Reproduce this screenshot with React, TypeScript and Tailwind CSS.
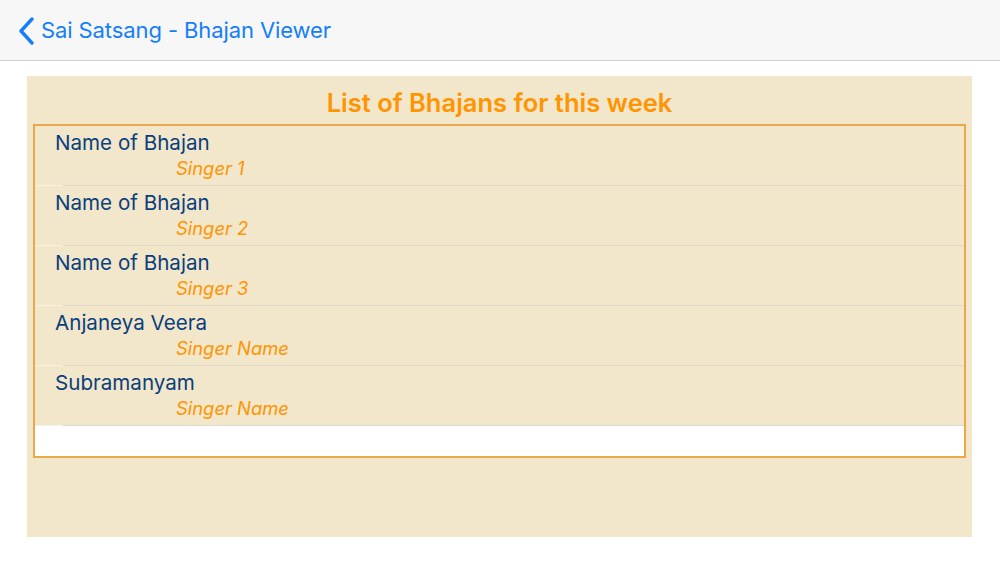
import React from "react";

const rows = [
  { name: "Name of Bhajan", singer: "Singer 1" },
  { name: "Name of Bhajan", singer: "Singer 2" },
  { name: "Name of Bhajan", singer: "Singer 3" },
  { name: "Anjaneya Veera", singer: "Singer Name" },
  { name: "Subramanyam", singer: "Singer Name" },
];

export default function App() {
  return (
    <div
      className="w-[1000px] h-[563px] bg-white flex flex-col"
      style={{ fontFamily: "Inter, 'Noto Sans', sans-serif" }}
    >
      <div className="h-[61px] bg-[#f7f7f7] border-b border-[#cfcfcf] flex items-center pl-[18px]">
        <svg width="18" height="28" viewBox="0 0 18 28" className="mr-[5px] mt-[1px]">
          <path
            d="M14 2 L3 14 L14 26"
            fill="none"
            stroke="#147efb"
            strokeWidth="3.4"
            strokeLinecap="round"
            strokeLinejoin="round"
          />
        </svg>
        <span className="text-[22px] text-[#147efb] tracking-[-0.1px]">Sai Satsang - Bhajan Viewer</span>
      </div>
      <div className="mt-[15px] ml-[27px] w-[945px] h-[461px] bg-[#f2e6cb] flex flex-col px-[6px]">
        <div className="h-[48px] flex items-center justify-center pt-[6px]">
          <span className="text-[25.5px] font-semibold text-[#ff9500]">List of Bhajans for this week</span>
        </div>
        <div className="border-2 border-[#eaa84a] h-[334px] flex flex-col">
          {rows.map((r, i) => (
            <div key={i} className="h-[60px] flex flex-col relative">
              <div className="pl-[20px] pt-[4px] text-[20.6px] leading-[26px] text-[#0b3f7c]">{r.name}</div>
              <div className="pl-[141px] text-[18.4px] leading-[24px] italic text-[#ff9500]">{r.singer}</div>
              <div className="absolute bottom-0 left-0 right-0 h-px flex">
                <div className="w-[28px] bg-[#f8f1e2]" />
                <div className="flex-1 bg-[#e0d8c6]" />
              </div>
            </div>
          ))}
          <div className="flex-1 bg-white" />
        </div>
      </div>
    </div>
  );
}
